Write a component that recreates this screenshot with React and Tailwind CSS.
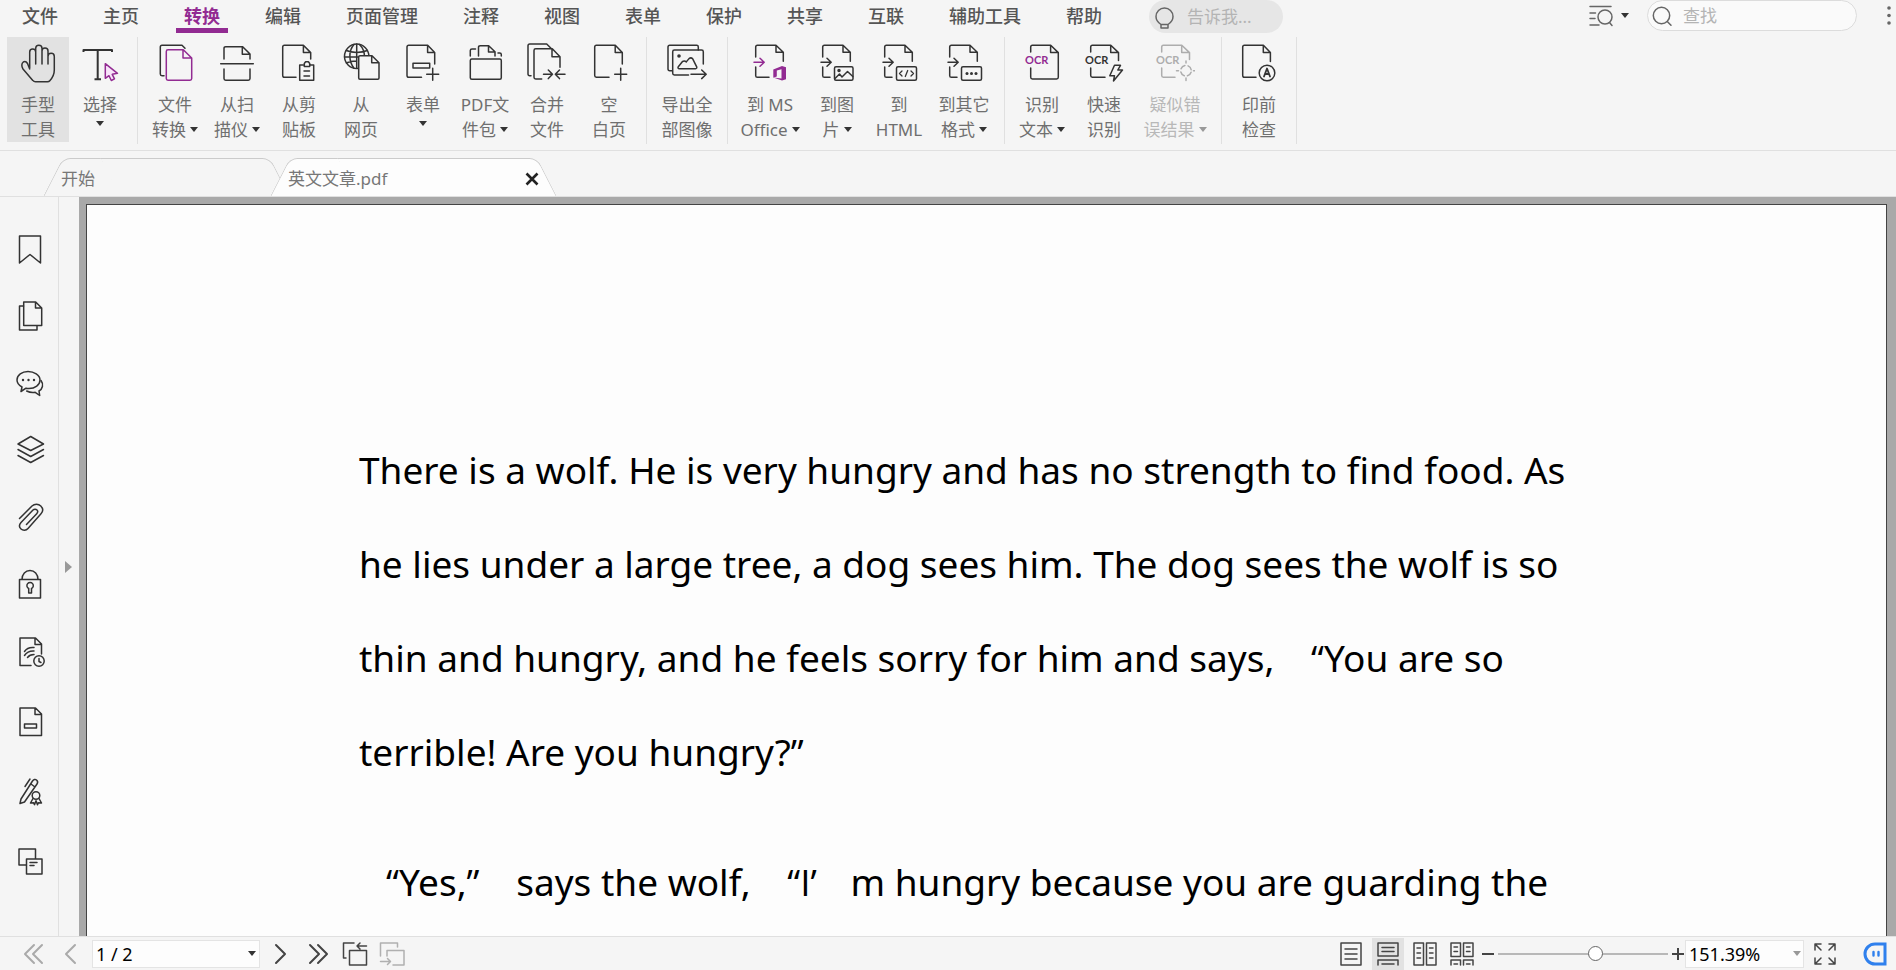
import { useState } from "react";
import clsx from "clsx";

const MENUS = [
  "文件",
  "主页",
  "转换",
  "编辑",
  "页面管理",
  "注释",
  "视图",
  "表单",
  "保护",
  "共享",
  "互联",
  "辅助工具",
  "帮助",
];

const PURPLE = "#922b92";

const Icon = ({ size = 40, className, children }) => (
  <svg
    width={size}
    height={size}
    viewBox={`0 0 ${size} ${size}`}
    fill="none"
    stroke="currentColor"
    strokeWidth="1.5"
    strokeLinecap="round"
    strokeLinejoin="round"
    className={clsx("shrink-0", className)}
    aria-hidden
  >
    {children}
  </svg>
);

const Caret = ({ className = "text-[#333]" }) => (
  <svg width="8" height="5" viewBox="0 0 8 5" className={clsx("shrink-0", className)} aria-hidden>
    <path d="M0 0h8L4 5z" fill="currentColor" />
  </svg>
);

const OcrText = ({ x, color = "currentColor" }) => (
  <text
    x={x}
    y="21"
    fill={color}
    stroke="none"
    fontFamily="Lato, sans-serif"
    fontWeight="700"
    fontSize="11"
  >
    OCR
  </text>
);

// document with an arrow going in from the left, used by all "convert to" buttons
const DocIn = ({ arrow = "currentColor", end = 14, children }) => (
  <Icon>
    <path d="M5.7 14V4q0-1.7 1.7-1.7H26l7.3 7v9M26 2.3v7h7.3" />
    <path d={`M5.7 24v8.700q0 1.600 1.700 1.600H${end}`} />
    <path d="M4 19.300h10M10 15.300l4.200 4-4.200 4" stroke={arrow} />
    {children}
  </Icon>
);

const HandIcon = () => (
  <Icon>
    <path d="M11.700 25V9a3 3 0 0 1 6 0M17.700 21V5.300a3.100 3.100 0 0 1 6.300 0V21M24 8a3 3 0 0 1 6 0v13M30 13.500a3.100 3.100 0 0 1 6.300 0V27c0 4.500-2 8-4.500 10.700-.6.700-1.300 1-2.300 1H17.500c-1.200 0-2-.4-2.700-1.300L5 26c-1.700-2.500-1.500-5.700.3-7 1.700-1 3.300 0 4.200 1.500l2.200 5.500" />
  </Icon>
);

const SelectIcon = () => (
  <Icon>
    <path d="M3.500 9V7h28.500v2M17.700 7v29.300M14.500 36.300h6.500" strokeWidth="2" strokeLinecap="butt" />
    <path
      d="M25.300 20.700v14.600l3.700-2.600 2.300 4.800 3.200-1.600-2.300-4.600 5.300-1z"
      stroke={PURPLE}
      fill="#f8e4fa"
    />
  </Icon>
);

const FileConvertIcon = () => (
  <Icon>
    <path d="M9 32.700H7q-1.700 0-1.700-1.700V4Q5.300 2.300 7 2.300h20l3 3" />
    <path
      d="M13 6.700h15.300l8.400 8.300v20.600q0 1.700-1.700 1.700H13q-1.700 0-1.700-1.700V8.400q0-1.700 1.700-1.700zM28 7v8h8.500"
      stroke={PURPLE}
    />
  </Icon>
);

const ScanIcon = () => (
  <Icon>
    <path d="M7 16V5.400q0-1.700 1.700-1.700h17L33 11v5M25.300 4v7.300H33M3.700 20.700h32.600M7 26v9.600q0 1.700 1.700 1.700h22.600q1.700 0 1.700-1.700V26" />
  </Icon>
);

const ClipboardIcon = () => (
  <Icon>
    <path d="M17 34.300H5.400q-1.700 0-1.700-1.700V4q0-1.700 1.700-1.700h19l7.300 7.300V16M24.400 2.500v7.100h7.300" />
    <path d="M24 22h-3.300v15.300h14V22H31.500M25.300 21.500v-1l1.300-1.700h2.800l1.300 1.700v3h-5.400zM25 28h5.500M25 33h5.500" />
  </Icon>
);

const WebIcon = () => (
  <Icon>
    <circle cx="15.700" cy="13.300" r="12.200" />
    <path d="M15.700 1.100v24M3.500 14h24M5.300 7.500c6 2.500 15 2.500 21 0M5.300 20c3-1.500 7-2 10-2M13 1.500c-5.500 6-5.500 17 0 23.700M18.500 1.500c4 4 5 8 5 12" />
    <path
      d="M19 12.700h12l7 7v15.400q0 1.200-1.200 1.200H19q-1.300 0-1.300-1.200V14q0-1.300 1.300-1.300zM30.700 13v6.700H38"
      fill="#f5f5f5"
    />
  </Icon>
);

const FormIcon = () => (
  <Icon>
    <path d="M18.500 34.300H5.700q-1.700 0-1.700-1.700V4q0-1.700 1.700-1.700h19l7 7.300V21M24.600 2.500v7.100h7.100M10 20.300h16.700V25H10zM29.700 25.300v12M23.700 31.300h12" />
  </Icon>
);

const PortfolioIcon = () => (
  <Icon>
    <rect x="5.300" y="16" width="31" height="20.300" rx="1.500" />
    <path d="M5.300 13V7.500Q5.300 6 7 6h3.500M13.500 13V4.400q0-1.700 1.700-1.700h8.500l6.300 6V13M23.500 3v6H30M33 10h1.700q1.600 0 1.600 1.500V13" />
  </Icon>
);

const MergeIcon = () => (
  <Icon>
    <path d="M4 32.700H2.700Q1 32.700 1 31V2.700Q1 1 2.700 1h17L24 5.300" />
    <path d="M14.700 36H8.700Q7 36 7 34.300V7.400q0-1.700 1.700-1.700h16.600l7.700 8v10.600M25 6v7.700h8M16.500 31.300h9M21.300 27l4.200 4.300-4.200 4.300M38 31.300h-9.500M32.500 27l-4.200 4.300 4.200 4.300" />
  </Icon>
);

const BlankIcon = () => (
  <Icon>
    <path d="M20 34.300H7.400q-1.700 0-1.700-1.700V4q0-1.700 1.700-1.700h18.900l7 7.300V21M26.200 2.500v7.100h7.100M31.700 25.300v12M25.700 31.300h12" />
  </Icon>
);

const ExportImagesIcon = () => (
  <Icon>
    <path d="M5 27.700H2.700Q1 27.700 1 26V4q0-1.700 1.700-1.700h27q1.600 0 1.600 1.700v3" />
    <path d="M21.500 32H7.400q-1.700 0-1.700-1.700V8.700Q5.700 7 7.400 7h27.200q1.700 0 1.700 1.700V21M24 31.300h15M34.700 27l4.500 4.300-4.500 4.300" />
    <path d="M12.500 25.700q-2.200-.2-1.200-2l4-5q2-1.500 4 .2l2.700-3.300q2-1.500 3.700.2l4 8q.5 1.700-1.200 1.900z" />
    <circle cx="12" cy="13" r="1.800" fill="currentColor" stroke="none" />
  </Icon>
);

const ToOfficeIcon = () => (
  <DocIn arrow={PURPLE} end={19}>
    <path
      d="M23.300 26.500l8.700-3.500 4 1.300v12L32 37.600l-8.700-3.100L31.500 35.400V26.200l-4.700 1.200v6l-3.500 1.400z"
      fill={PURPLE}
      stroke="none"
    />
  </DocIn>
);

const ToImageIcon = () => (
  <DocIn end={13}>
    <rect x="17.500" y="23.700" width="18.500" height="13.600" rx="1.500" />
    <path d="M18 35.500l4.500-4.500 2.500 3 5.500-5.500 5.300 5" />
    <circle cx="22" cy="27.500" r="1" fill="currentColor" />
  </DocIn>
);

const ToHtmlIcon = () => (
  <DocIn end={13}>
    <rect x="17.500" y="23.700" width="20" height="13.600" rx="1.500" />
    <path d="M23 28l-2.500 2.500L23 33M32 28l2.500 2.500L32 33M28.700 27.500l-2.400 6" strokeWidth="1.300" />
  </DocIn>
);

const ToOtherIcon = () => (
  <DocIn end={13}>
    <rect x="17.500" y="23.700" width="20" height="13.600" rx="1.500" />
    <g fill="currentColor" stroke="none">
      <circle cx="23" cy="30.500" r="1.500" />
      <circle cx="27.500" cy="30.500" r="1.500" />
      <circle cx="32" cy="30.500" r="1.500" />
    </g>
  </DocIn>
);

const OcrIcon = () => (
  <Icon>
    <path d="M8.700 9V4q0-1.700 1.700-1.700h18.300l7.600 7.300V34.300q0 1.700-1.700 1.700H10.400q-1.700 0-1.700-1.700V25M28.600 2.500v7.100h7.700" />
    <OcrText x="3" color={PURPLE} />
  </Icon>
);

const QuickOcrIcon = () => (
  <Icon>
    <path d="M6.700 9V4q0-1.700 1.700-1.700h18.400l7.700 7.300v8M26.700 2.500v7.100h7.800M6.700 25v7.600q0 1.700 1.700 1.700H21" />
    <path d="M30.500 22.300l-4.700 10.400h4.700l-1 5.300 9-11h-4.700l2.700-4.700z" />
    <OcrText x="1" />
  </Icon>
);

const SuspectIcon = () => (
  <Icon>
    <path d="M6.700 9V4q0-1.700 1.700-1.700h18.400l7.700 7.300v7M26.700 2.500v7.100h7.800M6.700 25v7.600q0 1.700 1.700 1.700H20" />
    <circle cx="31" cy="27.700" r="5.300" strokeDasharray="5 3.300" strokeDashoffset="-1.600" />
    <path d="M31 18v2M31 35v2.500M21.500 27.700h2M38.500 27.700h1.500" />
    <OcrText x="1" />
  </Icon>
);

const PreflightIcon = () => (
  <Icon>
    <path d="M17 34.300H5.400q-1.700 0-1.700-1.700V4q0-1.700 1.700-1.700h19l7 7.300v9M24.300 2.500v7.100h7.100" />
    <circle cx="28" cy="30" r="7.800" />
    <path d="M25 33.500l3-8 3 8M26 31h4" strokeWidth="1.800" />
  </Icon>
);

const RIBBON = [
  [
    { icon: HandIcon, lines: ["手型", "工具"], active: true },
    { icon: SelectIcon, lines: ["选择"], caret: "below" },
  ],
  [
    { icon: FileConvertIcon, lines: ["文件", "转换"], caret: "inline" },
    { icon: ScanIcon, lines: ["从扫", "描仪"], caret: "inline" },
    { icon: ClipboardIcon, lines: ["从剪", "贴板"] },
    { icon: WebIcon, lines: ["从", "网页"] },
    { icon: FormIcon, lines: ["表单"], caret: "below" },
    { icon: PortfolioIcon, lines: ["PDF文", "件包"], caret: "inline" },
    { icon: MergeIcon, lines: ["合并", "文件"] },
    { icon: BlankIcon, lines: ["空", "白页"] },
  ],
  [{ icon: ExportImagesIcon, lines: ["导出全", "部图像"], width: "w-[68px]" }],
  [
    { icon: ToOfficeIcon, lines: ["到 MS", "Office"], caret: "inline", width: "w-[72px]" },
    { icon: ToImageIcon, lines: ["到图", "片"], caret: "inline" },
    { icon: ToHtmlIcon, lines: ["到", "HTML"] },
    { icon: ToOtherIcon, lines: ["到其它", "格式"], caret: "inline", width: "w-[68px]" },
  ],
  [
    { icon: OcrIcon, lines: ["识别", "文本"], caret: "inline" },
    { icon: QuickOcrIcon, lines: ["快速", "识别"] },
    {
      icon: SuspectIcon,
      lines: ["疑似错", "误结果"],
      caret: "inline",
      width: "w-[80px]",
      disabled: true,
    },
  ],
  [{ icon: PreflightIcon, lines: ["印前", "检查"] }],
];

const RibbonButton = ({ item }) => {
  const Glyph = item.icon;
  return (
    <button
      type="button"
      disabled={item.disabled}
      className={clsx(
        "flex h-[105px] shrink-0 flex-col items-center pt-[6px] text-[17px] leading-[25px] whitespace-nowrap",
        item.width || "w-[62px]",
        item.active && "bg-[#e2e2e2]",
        item.disabled ? "text-[#b8b8b8]" : "text-[#6f6f6f]"
      )}
    >
      <span className={item.disabled ? "text-[#adadad]" : "text-[#333]"}>
        <Glyph />
      </span>
      <span className="mt-[9px]">{item.lines[0]}</span>
      {item.lines[1] && (
        <span className="flex items-center gap-1">
          {item.lines[1]}
          {item.caret === "inline" && (
            <Caret className={item.disabled ? "text-[#999]" : "text-[#333]"} />
          )}
        </span>
      )}
      {item.caret === "below" && (
        <span className="mt-1">
          <Caret />
        </span>
      )}
    </button>
  );
};

const SIDE_TOP = [
  {
    label: "书签",
    art: <path d="M4.500 2h21v27L15 20.500 4.500 29z" />,
  },
  {
    label: "页面",
    art: (
      <>
        <path d="M8.500 5H4.500v24h17.500v-4" />
        <path d="M8.700 1h12l6 6v17.500h-18zM20.500 1v6h6.200" />
      </>
    ),
  },
  {
    label: "注释",
    art: (
      <>
        <path d="M6 23.500l1-4.500C3.500 17 2 14.500 2 12c0-5 5-8.500 11-8.500S25 7 25 12s-5 8.500-11 8.500c-1 0-2-.1-3-.3z" />
        <path d="M26 12.500c3 4 1.500 8.500-2 10.500l.7 4.500-4.500-3.200c-3 .5-6 0-8.500-1.300" />
        <g fill="currentColor" stroke="none">
          <circle cx="8" cy="12" r="1.200" />
          <circle cx="13.500" cy="12" r="1.200" />
          <circle cx="19" cy="12" r="1.200" />
        </g>
      </>
    ),
  },
  {
    label: "图层",
    art: <path d="M15.700 1.500L28.500 9l-12.800 6.500L3 9zM3 14.500L15.700 21.500 28.500 14.500M3 20.500L15.700 27.500 28.500 20.500" />,
  },
  {
    label: "附件",
    art: (
      <path d="M4.500 16.500L17 4c2.500-2.300 6.500-2.300 8.800 0s2.300 5.500 0 8L13 26.500c-2 2.300-5 2.300-7 .5s-1.700-4.500 0-6.500L18 8c1.300-1.300 3-1 4 0s.8 2.500-.3 3.700L11.500 22.500" />
    ),
  },
  {
    label: "安全",
    art: (
      <>
        <path d="M4.500 10.500h21V29h-21zM7 10.500C7 5 10.500 1.500 15 1.500s8 3.500 8 9" />
        <path d="M13.700 19.500a3.200 3.200 0 1 1 2.800 0V24h-2.800z" />
      </>
    ),
  },
];

const SIDE_BOTTOM = [
  {
    label: "数字签名",
    art: (
      <>
        <path d="M16 28.500H5V1h15.500l6 6v10M20 1v6.500h6.500" />
        <circle cx="24" cy="24" r="5.200" />
        <path d="M24 21.500v3l2 1M9.500 14.500c2-3 5-4.500 9.500-4M9.500 18.500c2-3 5-4.800 9.500-4.500M12.500 20.500c1.500-2 3.500-3 6.500-3" />
      </>
    ),
  },
  {
    label: "字段",
    art: <path d="M5 1h15.500l6 6v21.500H5zM20 1v6.500h6.500M9.500 17h12v4h-12z" />,
  },
  {
    label: "签名",
    art: (
      <>
        <path d="M5 26.500l1-4.500L17.500 4c1-1.500 2.800-2 4-1s1.500 2.500.5 4L9.500 25zM10 9.500L15 2M16 7l4 3" />
        <circle cx="21" cy="18.500" r="3.800" />
        <path d="M18 21.500l-2.500 4.500 3-.3 1 2 1.500-4 1.500 4 1-2 3 .3-2.500-4.500" />
      </>
    ),
  },
  {
    label: "文章",
    art: <path d="M11 18H4V2h16.500v10M11.500 12H27v15H11.500zM15 15.500h7M15 18.500h4" />,
  },
];

const SideButton = ({ item, className }) => (
  <button
    type="button"
    aria-label={item.label}
    className={clsx("flex w-full items-center justify-center pl-0.5 text-[#333]", className)}
  >
    <Icon size={30}>{item.art}</Icon>
  </button>
);

const Tab = ({ active, children }) => (
  <div className={clsx("relative h-[38px]", active && "z-10")}>
    <span
      className={clsx(
        "absolute inset-y-0 left-0 w-3/4 -skew-x-[27deg] rounded-tl-lg border-t border-l border-[#cbcbcb]",
        active ? "bg-[#fdfdfd]" : "bg-[#f5f5f5]"
      )}
    />
    <span
      className={clsx(
        "absolute inset-y-0 right-0 w-3/4 skew-x-[27deg] rounded-tr-lg border-t border-r border-[#cbcbcb]",
        active ? "bg-[#fdfdfd]" : "bg-[#f5f5f5]"
      )}
    />
    <div className="relative flex h-full items-center justify-between px-2 pt-1">{children}</div>
  </div>
);

// curly quotes take a full-width cell, as in Chinese typesetting
const OpenQuote = () => (
  <span className="inline-block w-10 text-right font-['Open_Sans',sans-serif]">“</span>
);
const CloseQuote = ({ children = "”" }) => (
  <span className="inline-block w-10 font-['Open_Sans',sans-serif]">{children}</span>
);

const VIEW_MODES = [
  {
    label: "单页",
    art: <path d="M2 1h20v22H2zM6 7h12M6 12h12M6 17h12" />,
  },
  {
    label: "连续",
    art: <path d="M2 1h20v13H2zM6 5.500h12M6 9.500h12M2 23v-5h20v5M6 22h12" />,
  },
  {
    label: "双页",
    art: <path d="M1 1h9.500v22H1zM13.500 1H23v22h-9.500zM4 6h3.500M4 11h3.500M4 16h3.500M16.500 6H20M16.500 11H20M16.500 16H20" />,
  },
  {
    label: "双页连续",
    art: <path d="M1 1h9.500v13.500H1zM13.500 1H23v13.500h-9.500zM4 5h3.500M4 9.500h3.500M16.500 5H20M16.500 9.500H20M1 23v-5h9.500v5M13.500 23v-5H23v5M4 22h3.500M16.500 22H20" />,
  },
];

const App = () => {
  const [menu, setMenu] = useState("转换");
  const [mode, setMode] = useState("连续");
  const [zoom, setZoom] = useState(58);

  return (
    <div
      lang="zh-CN"
      className="flex h-screen flex-col overflow-hidden bg-[#f5f5f5] font-['Noto_Sans','Noto_Sans_CJK_SC',sans-serif] text-[#444]"
    >
      <header className="flex h-[33px] shrink-0 items-start pl-[22px]">
        <nav className="flex gap-[45px] text-[18px] leading-[32px] font-medium">
          {MENUS.map((m) => (
            <button
              key={m}
              type="button"
              onClick={() => setMenu(m)}
              className={clsx(
                "relative flex h-[33px] whitespace-nowrap",
                m === menu ? "font-bold text-[#922b92]" : "text-[#555]"
              )}
            >
              {m}
              {m === menu && <span className="absolute -inset-x-2 bottom-0 h-[5px] bg-[#922b92]" />}
            </button>
          ))}
        </nav>

        <label className="ml-[47px] flex h-[33px] w-[134px] items-center rounded-full bg-[#e6e6e6] pl-[4px] text-[#666]">
          <Icon size={24}>
            <path d="M8 19.500C5 17.500 3 15 3 11.500a8.500 8.500 0 0 1 17 0c0 3.500-2 6-5 8zM8 19.500V23h7v-3.500" />
          </Icon>
          <input
            type="text"
            placeholder="告诉我..."
            aria-label="告诉我"
            className="ml-2.5 w-[80px] text-[17px] outline-none placeholder:text-[#b4b4b4]"
          />
        </label>

        <div className="ml-auto flex items-center pr-0.5">
          <button type="button" aria-label="高级搜索" className="flex h-[30px] items-center gap-2 text-[#666]">
            <Icon size={24}>
              <path d="M1 2.500h21M1 9h5.500M1 14.500h5M1 21h9" />
              <circle cx="16" cy="13" r="7" />
              <path d="M20.500 18.500l2.500 3" />
            </Icon>
            <Caret />
          </button>
          <label className="ml-[18px] flex h-[31px] w-[210px] items-center rounded-full border border-[#dcdcdc] bg-[#fafafa] pl-[3px] text-[#666]">
            <Icon size={22}>
              <circle cx="10.500" cy="10.500" r="8.200" />
              <path d="M16.500 16.700l3.500 3.500" />
            </Icon>
            <input
              type="search"
              placeholder="查找"
              aria-label="查找"
              className="ml-2.5 w-[150px] text-[17px] outline-none placeholder:text-[#b4b4b4]"
            />
          </label>
          <button type="button" aria-label="更多" className="ml-[27px] text-[#666]">
            <svg width="10" height="24" viewBox="0 0 10 24" fill="currentColor" aria-hidden>
              <circle cx="5" cy="4" r="1.800" />
              <circle cx="5" cy="11.500" r="1.800" />
              <circle cx="5" cy="19" r="1.800" />
            </svg>
          </button>
        </div>
      </header>

      <div className="flex h-[118px] shrink-0 border-b border-[#e0e0e0] pt-1 pl-px">
        {RIBBON.map((group, i) => (
          <div key={i} className="flex h-[107px] border-r border-[#e0e0e0] px-[6px]">
            {group.map((item) => (
              <RibbonButton key={item.lines.join("")} item={item} />
            ))}
          </div>
        ))}
      </div>

      <div className="flex h-[46px] shrink-0 items-end border-b border-[#e0e0e0] pl-[53px] text-[17px] text-[#777]">
        <div className="w-[227px]">
          <Tab>
            <button type="button">开始</button>
          </Tab>
        </div>
        <div className="w-[267px]">
          <Tab active>
            <button type="button">英文文章.pdf</button>
            <button type="button" aria-label="关闭" className="text-[#222]">
              <svg width="14" height="14" viewBox="0 0 14 14" stroke="currentColor" strokeWidth="2.600" aria-hidden>
                <path d="M1.500 1.500l11 11M12.500 1.500l-11 11" />
              </svg>
            </button>
          </Tab>
        </div>
      </div>

      <div className="flex min-h-0 flex-1">
        <aside className="flex w-[59px] shrink-0 flex-col border-r border-[#e0e0e0] pt-[18px]">
          {SIDE_TOP.map((item) => (
            <SideButton key={item.label} item={item} className="h-[67px]" />
          ))}
          {SIDE_BOTTOM.map((item) => (
            <SideButton key={item.label} item={item} className="h-[70px]" />
          ))}
        </aside>
        <button type="button" aria-label="展开面板" className="flex w-[20px] shrink-0 items-center pl-1.5 text-[#999]">
          <svg width="7" height="12" viewBox="0 0 7 12" aria-hidden>
            <path d="M0 0l7 6-7 6z" fill="currentColor" />
          </svg>
        </button>
        <main className="flex min-w-0 flex-1 overflow-hidden bg-[#a9a9a9] pt-[7px] pr-[9px] pl-[7px]">
          <article
            lang="en"
            className="flex-1 border-x border-t border-[#444] bg-[#fdfdfd] pt-[218px] pl-[272px] text-[37px] leading-[94px] whitespace-nowrap text-black"
          >
            <p>
              There is a wolf. He is very hungry and has no strength to find food. As
              <br />
              he lies under a large tree, a dog sees him. The dog sees the wolf is so
              <br />
              thin and hungry, and he feels sorry for him and says, <OpenQuote />You are so
              <br />
              terrible! Are you hungry?<CloseQuote />
            </p>
            <p className="mt-9">
              <OpenQuote />Yes,<CloseQuote /> says the wolf, <OpenQuote />
              <span className="font-['Open_Sans',sans-serif]">I</span>
              <CloseQuote>’</CloseQuote>m hungry because you are guarding the
            </p>
          </article>
        </main>
      </div>

      <footer className="flex h-[34px] shrink-0 items-center border-t border-[#e0e0e0] text-[#444]">
        <button type="button" aria-label="第一页" className="ml-[22px] text-[#aaa]">
          <Icon size={24}>
            <path d="M12 3l-9 9 9 9M20 3l-9 9 9 9" strokeWidth="2" />
          </Icon>
        </button>
        <button type="button" aria-label="上一页" className="ml-[14px] text-[#aaa]">
          <Icon size={24}>
            <path d="M15 3l-9 9 9 9" strokeWidth="2" />
          </Icon>
        </button>
        <div className="relative ml-[8px] w-[168px]">
          <select
            aria-label="页码"
            className="h-[28px] w-full appearance-none border border-[#e4e4e4] bg-[#fdfdfd] pl-[3px] text-[18px] leading-[26px] text-black outline-none"
          >
            <option>1 / 2</option>
            <option>2 / 2</option>
          </select>
          <span className="pointer-events-none absolute inset-y-0 right-1 flex items-center">
            <Caret />
          </span>
        </div>
        <button type="button" aria-label="下一页" className="ml-[8px]">
          <Icon size={24}>
            <path d="M8 3l9 9-9 9" strokeWidth="2" />
          </Icon>
        </button>
        <button type="button" aria-label="最后一页" className="ml-[14px]">
          <Icon size={24}>
            <path d="M4 3l9 9-9 9M12 3l9 9-9 9" strokeWidth="2" />
          </Icon>
        </button>
        <button type="button" aria-label="上一视图" className="ml-[12px]">
          <Icon size={26}>
            <path d="M4 17H1.500V2h10.500M7.500 9.500h17V24h-17zM24.500 5H15M18 2l-3 3 3 3" />
          </Icon>
        </button>
        <button type="button" aria-label="下一视图" disabled className="ml-[11px] text-[#b0b0b0]">
          <Icon size={26}>
            <path d="M1.500 15V2h17v4M8 15V9.500h17V24H14M1.500 20.500H11M8.500 17.500l3 3-3 3" />
          </Icon>
        </button>

        <div className="ml-auto flex items-center">
          <div className="flex gap-[5px]">
            {VIEW_MODES.map((v) => (
              <button
                key={v.label}
                type="button"
                aria-label={v.label}
                onClick={() => setMode(v.label)}
                className={clsx(
                  "flex h-[32px] w-8 items-center justify-center",
                  v.label === mode && "bg-[#e2e2e2]"
                )}
              >
                <Icon size={24}>{v.art}</Icon>
              </button>
            ))}
          </div>
          <button type="button" aria-label="缩小" className="ml-[3px]">
            <Icon size={14}>
              <path d="M1 7h12" strokeWidth="2" strokeLinecap="butt" />
            </Icon>
          </button>
          <input
            type="range"
            aria-label="缩放"
            min="0"
            max="100"
            value={zoom}
            onChange={(e) => setZoom(e.target.value)}
            className="mx-[3px] h-[2px] w-[170px] appearance-none bg-[#b8b8b8] [&::-webkit-slider-thumb]:size-[15px] [&::-webkit-slider-thumb]:appearance-none [&::-webkit-slider-thumb]:rounded-full [&::-webkit-slider-thumb]:border [&::-webkit-slider-thumb]:border-[#666] [&::-webkit-slider-thumb]:bg-white"
          />
          <button type="button" aria-label="放大">
            <Icon size={14}>
              <path d="M1 7h12M7 1v12" strokeWidth="2" strokeLinecap="butt" />
            </Icon>
          </button>
          <div className="relative w-[119px]">
            <select
              aria-label="缩放比例"
              className="h-[28px] w-full appearance-none border border-[#e4e4e4] bg-[#fdfdfd] pl-[3px] text-[18px] leading-[26px] text-black outline-none"
            >
              <option>151.39%</option>
              <option>100%</option>
            </select>
            <span className="pointer-events-none absolute inset-y-0 right-[3px] flex items-center">
              <Caret className="text-[#999]" />
            </span>
          </div>
          <button type="button" aria-label="全屏" className="ml-[9px]">
            <Icon size={24}>
              <path d="M2 8V2h6M2 2l6 6M16 2h6v6M22 2l-6 6M2 16v6h6M2 22l6-6M22 16v6h-6M22 22l-6-6" />
            </Icon>
          </button>
          <button type="button" aria-label="助手" className="mr-[9px] ml-[26px] text-[#2f80ed]">
            <Icon size={24}>
              <path d="M22 2v20H12a10 10 0 0 1 0-20z" strokeWidth="3" strokeLinejoin="miter" />
              <path d="M10.500 10v3.500M15.500 10v3.500" strokeWidth="2.400" />
            </Icon>
          </button>
        </div>
      </footer>
    </div>
  );
};

export default App;
